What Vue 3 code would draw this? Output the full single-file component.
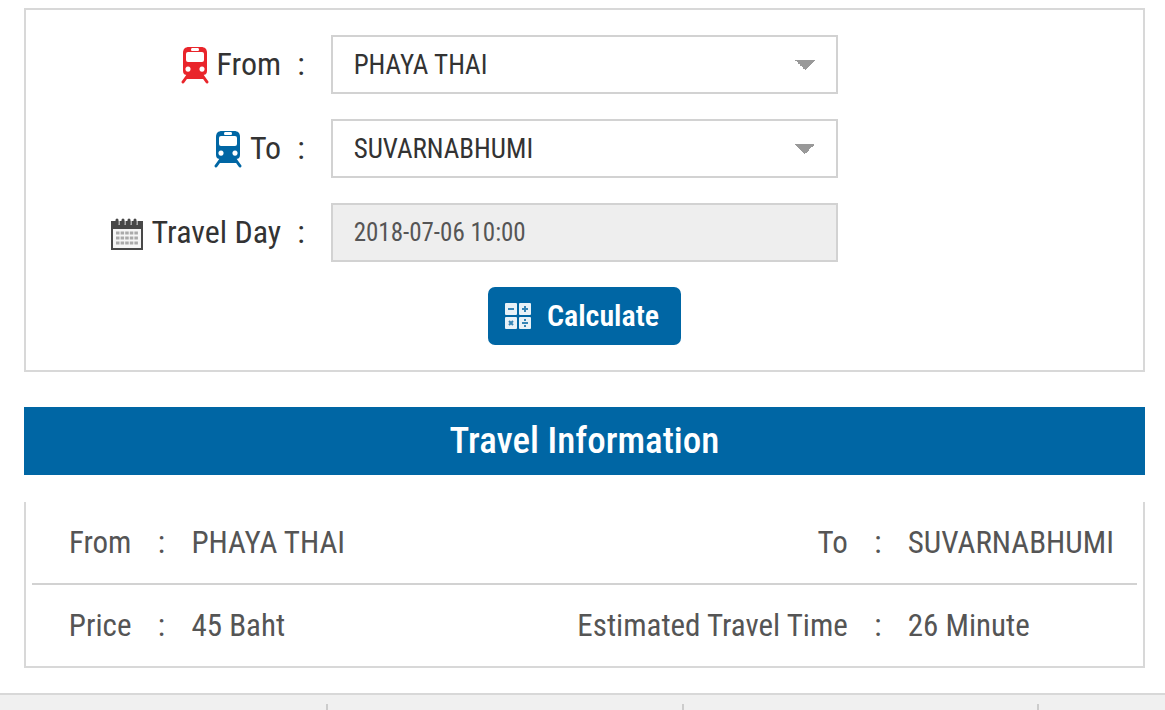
<script setup>
import { ref } from 'vue'

const stations = ['PHAYA THAI', 'RATCHAPRAROP', 'MAKKASAN', 'RAMKHAMHAENG', 'HUA MAK', 'BAN THAP CHANG', 'LAT KRABANG', 'SUVARNABHUMI']
const from = ref('PHAYA THAI')
const to = ref('SUVARNABHUMI')
const day = ref('2018-07-06 10:00')
</script>

<template>
  <div class="page">
    <main>
      <form class="planner" @submit.prevent>
        <div class="row">
          <label for="from">
            <svg class="train red" viewBox="0 0 28 38" aria-hidden="true">
              <path fill="currentColor" fill-rule="evenodd" d="M8 1h12c4 0 6 2 6 6v18c0 3-2 4-4 4H6c-2 0-4-1-4-4V7c0-4 2-6 6-6zM11 2q-1 0-1 1.500t1 1.500h6q1 0 1-1.500t-1-1.500zM7 6q-2 0-2 2v6q0 2 2 2h14q2 0 2-2V8q0-2-2-2zM7 20.500a2.600 2.600 0 1 0 .01 0zM21 20.500a2.600 2.600 0 1 0 .01 0z" />
              <path d="M7 29l-5 7M21 29l5 7" stroke="currentColor" stroke-width="3" stroke-linecap="round" />
              <path d="M6 31h16" stroke="currentColor" stroke-width="4" />
            </svg>
            <span>From</span><span class="colon">:</span>
          </label>
          <select id="from" v-model="from" class="field">
            <option v-for="s in stations" :key="s">{{ s }}</option>
          </select>
        </div>
        <div class="row">
          <label for="to">
            <svg class="train blue" viewBox="0 0 28 38" aria-hidden="true">
              <path fill="currentColor" fill-rule="evenodd" d="M8 1h12c4 0 6 2 6 6v18c0 3-2 4-4 4H6c-2 0-4-1-4-4V7c0-4 2-6 6-6zM11 2q-1 0-1 1.500t1 1.500h6q1 0 1-1.500t-1-1.500zM7 6q-2 0-2 2v6q0 2 2 2h14q2 0 2-2V8q0-2-2-2zM7 20.500a2.600 2.600 0 1 0 .01 0zM21 20.500a2.600 2.600 0 1 0 .01 0z" />
              <path d="M7 29l-5 7M21 29l5 7" stroke="currentColor" stroke-width="3" stroke-linecap="round" />
              <path d="M6 31h16" stroke="currentColor" stroke-width="4" />
            </svg>
            <span>To</span><span class="colon">:</span>
          </label>
          <select id="to" v-model="to" class="field">
            <option v-for="s in stations" :key="s">{{ s }}</option>
          </select>
        </div>
        <div class="row">
          <label for="day">
            <svg class="calendar" viewBox="0 0 34 34" aria-hidden="true">
              <rect x="1" y="5" width="32" height="29" fill="#484848" />
              <rect x="3" y="13" width="28" height="19" fill="#f6f6f6" />
              <path d="M9 5v4M15 5v4M21 5v4M27 5v4" stroke="#aaa" stroke-width="2" />
              <path d="M7 4v4M13 4v4M19 4v4M25 4v4" stroke="#484848" stroke-width="3" stroke-linecap="round" />
              <path d="M6 17h22M6 22h22M6 27h22" stroke="#aaa" stroke-width="3" stroke-dasharray="3.500 1.100" />
            </svg>
            <span>Travel Day</span><span class="colon">:</span>
          </label>
          <input id="day" v-model="day" class="field date" type="text" readonly>
        </div>
        <button type="submit">
          <svg viewBox="0 0 26 26" aria-hidden="true">
            <g fill="#e8f1f7">
              <rect width="12" height="12" rx="1" /><rect x="14" width="12" height="12" rx="1" />
              <rect y="14" width="12" height="12" rx="1" /><rect x="14" y="14" width="12" height="12" rx="1" />
            </g>
            <path d="M3 6h6M17 6h6M20 3v6M4 18l4 4M8 18l-4 4M17 20h6M20 16v2M20 22v2" stroke="#3584b5" stroke-width="2" />
          </svg>
          Calculate
        </button>
      </form>

      <h2>Travel Information</h2>

      <div class="result">
        <table>
          <colgroup><col class="c1"><col class="sep"><col class="c2"><col class="c3"><col class="sep"><col></colgroup>
          <tbody>
            <tr>
              <th scope="row">From</th><td class="mid">:</td><td>{{ from }}</td>
              <th scope="row">To</th><td class="mid">:</td><td>{{ to }}</td>
            </tr>
            <tr>
              <th scope="row">Price</th><td class="mid">:</td><td>45 Baht</td>
              <th scope="row">Estimated Travel Time</th><td class="mid">:</td><td>26 Minute</td>
            </tr>
          </tbody>
        </table>
      </div>
    </main>
    <footer><div></div><div></div><div></div><div></div></footer>
  </div>
</template>

<style>
body { background: #fff; }
</style>

<style scoped>
* { box-sizing: border-box; }
.page {
  display: flex;
  flex-direction: column;
  min-height: 100vh;
  font-family: "Liberation Sans Narrow", "Roboto Condensed", "Liberation Sans", sans-serif;
  font-size: 31px;
  line-height: 36px;
  color: #333;
}
main { padding: 8px 20px 25px 24px; }
.planner {
  display: flex;
  flex-direction: column;
  gap: 25px;
  padding: 25px 0;
  border: 2px solid #d8d8d8;
}
.row {
  display: grid;
  grid-template-columns: 3fr 5fr 3fr;
}
label {
  display: flex;
  align-items: center;
  justify-content: flex-end;
  padding: 0 26px 2px 0;
  font-size: 32px;
  white-space: nowrap;
}
.colon { margin-left: 16px; }
label svg { flex: none; margin: 2px 8px 0 0; }
.train { width: 28px; height: 38px; }
.red { color: #e9252b; }
.blue { color: #0066a4; }
.calendar { width: 34px; height: 34px; }
.field {
  width: 100%;
  height: 59px;
  padding: 0 21px;
  border: 2px solid #d2d2d2;
  border-radius: 0;
  appearance: none;
  background-color: #fff;
  color: #333;
  font: inherit;
  font-size: 27px;
}
select.field {
  background-image: conic-gradient(from -45deg at 50% 100%, #999 90deg, transparent 0);
  background-repeat: no-repeat;
  background-size: 20px 10px;
  background-position: right 21px center;
}
.field.date { background-color: #eee; color: #555; font-size: 25px; }
button {
  display: flex;
  align-items: center;
  align-self: center;
  gap: 16px;
  height: 58px;
  padding: 0 22px 0 17px;
  border: 0;
  border-radius: 7px;
  background: #0066a4;
  color: #fff;
  font: inherit;
  font-size: 30px;
  font-weight: 600;
}
button svg { width: 26px; height: 26px; }
h2 {
  margin: 35px 0 27px;
  padding: 16px 0;
  background: #0066a4;
  color: #fff;
  font-size: 37px;
  font-weight: 500;
  text-align: center;
}
.result {
  padding: 0 6px;
  border: 2px solid #d8d8d8;
  border-top: 0;
}
table {
  width: 100%;
  border-collapse: collapse;
  table-layout: fixed;
  color: #555;
}
td, th { height: 82px; padding: 0; white-space: nowrap; font-weight: 400; text-align: left; }
th { text-align: right; }
.mid { text-align: center; }
tr:first-child { border-bottom: 2px solid #d2d2d2; }
.sep { width: 60px; }
.c1 { width: 9%; }
.c2 { width: 30.4%; }
.c3 { width: 29%; }
footer {
  flex: 1;
  display: grid;
  grid-template-columns: 28fr 30.5fr 30.5fr 11fr;
  padding-top: 9px;
  border-top: 2px solid #d8d8d8;
  background: #f0f0f0;
}
footer div + div { border-left: 2px solid #ccc; }
</style>
